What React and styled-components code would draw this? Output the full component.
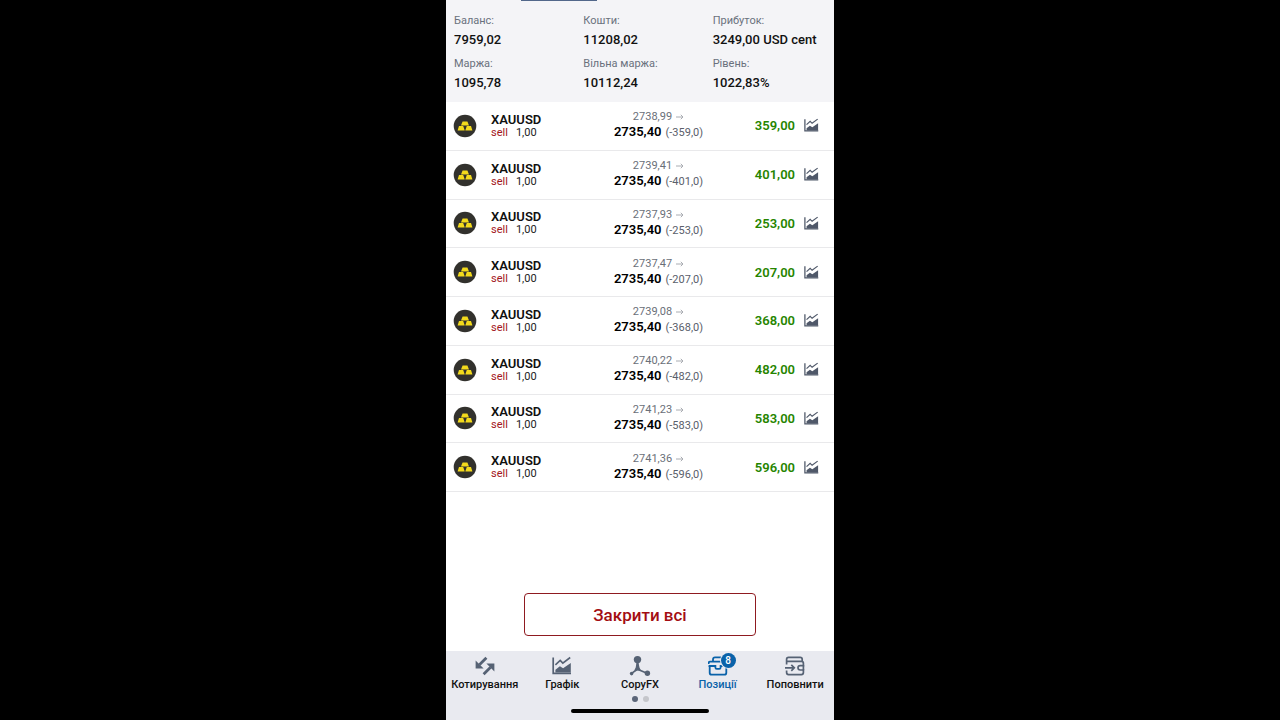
import { useState } from "react";
import styled, { createGlobalStyle } from "styled-components";

const summary = [
  { label: "Баланс:", value: "7959,02" },
  { label: "Кошти:", value: "11208,02" },
  { label: "Прибуток:", value: "3249,00 USD cent" },
  { label: "Маржа:", value: "1095,78" },
  { label: "Вільна маржа:", value: "10112,24" },
  { label: "Рівень:", value: "1022,83%" },
];

const positions = [
  { id: 1, open: "2738,99", points: "-359,0", profit: "359,00" },
  { id: 2, open: "2739,41", points: "-401,0", profit: "401,00" },
  { id: 3, open: "2737,93", points: "-253,0", profit: "253,00" },
  { id: 4, open: "2737,47", points: "-207,0", profit: "207,00" },
  { id: 5, open: "2739,08", points: "-368,0", profit: "368,00" },
  { id: 6, open: "2740,22", points: "-482,0", profit: "482,00" },
  { id: 7, open: "2741,23", points: "-583,0", profit: "583,00" },
  { id: 8, open: "2741,36", points: "-596,0", profit: "596,00" },
];

const GoldIcon = () => (
  <svg width="24" height="24" viewBox="0 0 24 24" aria-hidden="true">
    <circle cx="12" cy="12" r="11.3" fill="#32312d" />
    <g fill="#f3da1c">
      <path d="M9.6 7.4h4.8l1.6 4.2H8z" />
      <path d="M6 12.1h4.2l1.5 4.3H4.6z" />
      <path d="M13.8 12.1H18l1.4 4.3h-7.1z" />
    </g>
  </svg>
);

const ChartIcon = ({ size }) => (
  <svg width={size} height={size} viewBox="0 0 20 20" aria-hidden="true">
    <path d="M1.2 1.5v15.8H19" fill="none" stroke="currentColor" strokeWidth="1.7" />
    <path
      d="M3.4 8.8l4.8-4.4 2.6 2.7 7.4-5.6"
      fill="none"
      stroke="currentColor"
      strokeWidth="1.6"
    />
    <path d="M3.4 16.5v-2.7l4.5-3.6 3.2 2.1 7.7-5.2v9.4z" fill="currentColor" />
  </svg>
);

const QuotesIcon = () => (
  <svg width="20" height="20" viewBox="0 0 20 20" aria-hidden="true">
    <path
      d="M11.4 1.8L4.4 8.8M8.6 18.2l7-7"
      fill="none"
      stroke="currentColor"
      strokeWidth="2.8"
    />
    <g fill="currentColor">
      <path d="M.6 4.6v8h8z" />
      <path d="M19.4 15.4v-8h-8z" />
    </g>
  </svg>
);

const CopyIcon = () => (
  <svg width="22" height="22" viewBox="0 0 22 22" aria-hidden="true">
    <path
      d="M8.5 5v9M8.5 14.2l-6 4.2M8.5 14.2l9.5 4"
      fill="none"
      stroke="currentColor"
      strokeWidth="1.7"
    />
    <g fill="currentColor">
      <circle cx="8.5" cy="4.6" r="3.7" />
      <path d="M7.5 8h2l1 4.6 1.4 2.9H5.2l1.5-2.9z" />
      <circle cx="2.6" cy="18.6" r="1.8" />
      <circle cx="18.4" cy="18.3" r="2.7" />
    </g>
  </svg>
);

const CaseIcon = () => (
  <svg width="20" height="20" viewBox="0 0 20 20" aria-hidden="true">
    <g fill="none" stroke="currentColor" strokeWidth="1.8">
      <path d="M.6 8V7.2q0-1.6 1.6-1.6h15.6q1.6 0 1.6 1.6V8" />
      <path d="M5 5.6V3.4Q5 1.4 7 1.4h6q2 0 2 2v2.2" />
      <path d="M.6 10h6.8v1.4q0 1.4 1.4 1.4h2.4q1.4 0 1.4-1.4V10h6.8" />
      <path d="M1.7 10v6.7q0 2 2 2h12.6q2 0 2-2V10" />
    </g>
  </svg>
);

const WalletIcon = () => (
  <svg width="20" height="20" viewBox="0 0 20 20" aria-hidden="true">
    <g fill="none" stroke="currentColor" strokeWidth="1.7">
      <path d="M1.6 8.6V3.4q0-2 2-2h11.6q2 0 2 2v2" />
      <path d="M1.6 5.4h14.8q2 0 2 2v2.2h-3.2q-2.2 0-2.2 2.2t2.2 2.2h3.2v2.6q0 2-2 2H3.6q-2 0-2-2v-2" />
      <path d="M0 11.8h9M6.3 8.8l3 3-3 3" />
      <path d="M18.4 9.2v5" />
    </g>
  </svg>
);

const tabs = [
  { id: "quotes", label: "Котирування", icon: <QuotesIcon /> },
  { id: "chart", label: "Графік", icon: <ChartIcon size={20} /> },
  { id: "copy", label: "CopyFX", icon: <CopyIcon /> },
  { id: "positions", label: "Позиції", icon: <CaseIcon />, badge: 8 },
  { id: "deposit", label: "Поповнити", icon: <WalletIcon /> },
];

const App = () => {
  const [activeTab, setActiveTab] = useState("positions");

  return (
    <>
      <GlobalStyle />
      <Screen>
        <Summary>
          <TabIndicator />
          <SummaryGrid>
            {summary.map((item) => (
              <div key={item.label}>
                <SummaryLabel>{item.label}</SummaryLabel>
                <SummaryValue>{item.value}</SummaryValue>
              </div>
            ))}
          </SummaryGrid>
        </Summary>

        <PositionList>
          {positions.map((position) => (
            <PositionRow key={position.id}>
              <GoldIcon />
              <Instrument>
                <Symbol>XAUUSD</Symbol>
                <Order>
                  <Side>sell</Side>1,00
                </Order>
              </Instrument>
              <Prices>
                <OpenPrice>
                  {position.open}
                  <svg width="8" height="8" viewBox="0 0 8 8" aria-hidden="true">
                    <path
                      d="M0 4h7M4.8 1.8L7 4 4.8 6.2"
                      fill="none"
                      stroke="#a9acb2"
                    />
                  </svg>
                </OpenPrice>
                <CurrentPrice>
                  <b>2735,40</b>
                  <span>({position.points})</span>
                </CurrentPrice>
              </Prices>
              <Profit>{position.profit}</Profit>
              <ChartButton type="button" aria-label="Графік XAUUSD">
                <ChartIcon size={15} />
              </ChartButton>
            </PositionRow>
          ))}
        </PositionList>

        <Actions>
          <CloseAllButton type="button">Закрити всі</CloseAllButton>
        </Actions>

        <BottomBar>
          <Tabs>
            {tabs.map((tab) => (
              <TabButton
                key={tab.id}
                type="button"
                $active={activeTab === tab.id}
                onClick={() => setActiveTab(tab.id)}
              >
                <TabIcon>
                  {tab.icon}
                  {tab.badge ? <Badge>{tab.badge}</Badge> : null}
                </TabIcon>
                {tab.label}
              </TabButton>
            ))}
          </Tabs>
          <Dots>
            <Dot $active />
            <Dot />
          </Dots>
          <HomeBar />
        </BottomBar>
      </Screen>
    </>
  );
};

const GlobalStyle = createGlobalStyle`
  * {
    box-sizing: border-box;
  }

  body {
    margin: 0;
    background: #000;
    font-family: Roboto, "Noto Sans", sans-serif;
  }

  button {
    font-family: inherit;
    cursor: pointer;
  }
`;

const Screen = styled.main`
  display: flex;
  flex-direction: column;
  width: 100%;
  max-width: 388px;
  min-height: 100vh;
  margin: 0 auto;
  background: #fff;
`;

const Summary = styled.header`
  background: #f4f4f7;
`;

const TabIndicator = styled.div`
  width: 76px;
  height: 1px;
  margin-left: 75px;
  background: #52678a;
`;

const SummaryGrid = styled.dl`
  display: grid;
  grid-template-columns: repeat(3, 1fr);
  row-gap: 5px;
  margin: 0;
  padding: 11px 0 9px;

  > div {
    padding-left: 8px;
  }
`;

const SummaryLabel = styled.dt`
  font-size: 11px;
  line-height: 18px;
  color: #6a717d;
`;

const SummaryValue = styled.dd`
  margin: 0;
  font-size: 13px;
  font-weight: 500;
  line-height: 20px;
  color: #111;
  white-space: nowrap;
`;

const PositionList = styled.ul`
  display: grid;
  grid-auto-rows: 1fr;
  min-height: 390px;
  margin: 0;
  padding: 0;
  list-style: none;
`;

const PositionRow = styled.li`
  display: grid;
  grid-template-columns: 24px 84px 1fr 48px 15px;
  align-items: center;
  padding: 0 15px 0 7px;
  border-bottom: 1px solid #e9e9eb;
`;

const Instrument = styled.div`
  padding-left: 14px;
`;

const Symbol = styled.div`
  font-size: 13px;
  font-weight: 600;
  line-height: 14px;
  color: #111;
`;

const Order = styled.div`
  font-size: 11px;
  line-height: 12px;
  color: #222;
`;

const Side = styled.span`
  margin-right: 8px;
  color: #a31621;
`;

const Prices = styled.div`
  white-space: nowrap;
`;

const OpenPrice = styled.div`
  display: flex;
  align-items: center;
  justify-content: center;
  gap: 4px;
  font-size: 11px;
  line-height: 14px;
  color: #6a6f78;
`;

const CurrentPrice = styled.div`
  display: flex;
  align-items: baseline;
  justify-content: center;
  gap: 4px;
  font-size: 11px;
  line-height: 16px;
  color: #5a606b;

  b {
    font-size: 13px;
    font-weight: 600;
    color: #000;
  }
`;

const Profit = styled.div`
  display: flex;
  justify-content: flex-end;
  padding-right: 9px;
  font-size: 13px;
  font-weight: 600;
  color: #268500;
`;

const ChartButton = styled.button`
  display: flex;
  padding: 0;
  border: 0;
  background: none;
  color: #4f5869;
`;

const Actions = styled.div`
  display: flex;
  justify-content: center;
  margin-top: auto;
  padding: 16px 0 15px;
`;

const CloseAllButton = styled.button`
  width: 60%;
  height: 43px;
  padding: 0;
  border: 1px solid #8f1a20;
  border-radius: 4px;
  background: #fff;
  color: #a30d12;
  font-size: 17px;
  font-weight: 500;
`;

const BottomBar = styled.footer`
  padding: 4px 0 7px;
  background: #e9eaf0;
`;

const Tabs = styled.nav`
  display: grid;
  grid-template-columns: repeat(5, 1fr);
`;

const TabButton = styled.button`
  display: flex;
  flex-direction: column;
  align-items: center;
  gap: 1px;
  padding: 0;
  border: 0;
  background: none;
  color: ${({ $active }) => ($active ? "#0a62a9" : "#111")};
  font-size: 11px;
  font-weight: 500;
  line-height: 14px;
  white-space: nowrap;

  svg {
    color: ${({ $active }) => ($active ? "#0a62a9" : "#566274")};
  }
`;

const TabIcon = styled.span`
  position: relative;
  display: flex;
  align-items: center;
  height: 22px;
`;

const Badge = styled.span`
  position: absolute;
  top: -2px;
  right: -8px;
  width: 15px;
  height: 15px;
  border-radius: 50%;
  background: #0a62a9;
  box-shadow: 0 0 0 1px #e9eaf0;
  color: #fff;
  font-size: 10px;
  line-height: 15px;
  text-align: center;
`;

const Dots = styled.div`
  display: flex;
  justify-content: center;
  gap: 5px;
  padding: 4px 0 7px;
`;

const Dot = styled.span`
  width: 6px;
  height: 6px;
  border-radius: 50%;
  background: ${({ $active }) => ($active ? "#5b6578" : "#c5c6cb")};
`;

const HomeBar = styled.div`
  width: 138px;
  height: 4px;
  margin: 0 auto;
  border-radius: 2px;
  background: #000;
`;

export default App;
